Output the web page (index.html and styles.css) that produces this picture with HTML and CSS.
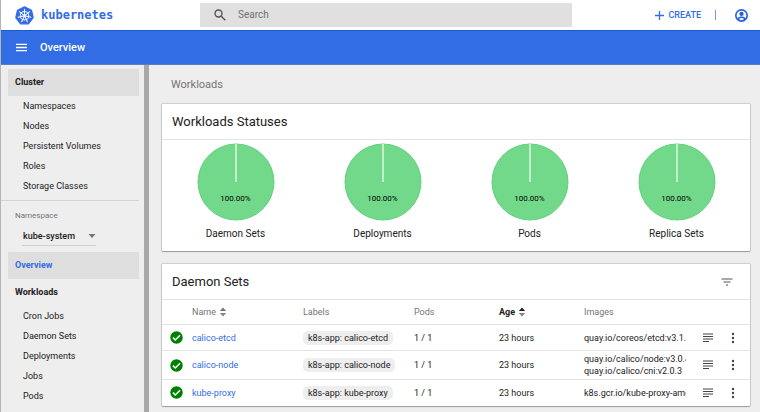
FILE: index.html
```html
<!DOCTYPE html>
<html lang="en">
<head>
<meta charset="utf-8">
<title>Overview - Kubernetes Dashboard</title>
<link rel="stylesheet" href="styles.css">
</head>
<body>
<svg class="defs" aria-hidden="true">
  <symbol id="check" viewBox="0 0 24 24"><circle cx="12" cy="12" r="11.500" fill="#008000"/><path d="M5.500 12.200l4.300 4.300 8.700-8.700" fill="none" stroke="#fff" stroke-width="2.800"/></symbol>
  <symbol id="sort" viewBox="0 0 8 10"><path class="up" d="M4 0.600L7.200 4H0.800z"/><path class="down" d="M0.800 6h6.400L4 9.400z"/></symbol>
  <symbol id="logs" viewBox="0 0 12 10"><path d="M1 1h10M1 3.500h10M1 6h10M1 8.500h6" fill="none" stroke="#444" stroke-width="1.200"/></symbol>
  <symbol id="dots" viewBox="0 0 4 12"><circle cx="2" cy="2" r="1.200"/><circle cx="2" cy="6" r="1.200"/><circle cx="2" cy="10" r="1.200"/></symbol>
  <symbol id="pie" viewBox="0 0 78 78"><circle cx="39" cy="39" r="38" fill="#72d88a" stroke="#5fd27a"/><path d="M39 1v38" stroke="#d8f5de" stroke-width="1.600"/></symbol>
</svg>
<header class="topbar">
  <a class="brand" href="#">
    <svg class="logo" viewBox="0 0 36 36" aria-hidden="true">
      <path d="M18 1.800L31.200 8.100 34.400 22.200 25.400 33.800H10.600L1.600 22.200 4.800 8.100z" fill="#326ce5" stroke="#326ce5" stroke-width="2.500" stroke-linejoin="round"/>
      <g fill="none" stroke="#fff" stroke-width="1.900" stroke-linecap="round">
        <circle cx="18" cy="18.500" r="8"/>
        <path d="M18 16V6M20 17l7.800-6.200M20.400 19.100l9.800 2.200M19.100 20.700l4.300 9M16.900 20.700l-4.300 9M15.600 19.100l-9.800 2.200M16 17l-7.800-6.200"/>
      </g>
      <circle cx="18" cy="18.500" r="2.600" fill="#fff"/>
    </svg>
    <span>kubernetes</span>
  </a>
  <label class="search">
    <svg viewBox="0 0 12 12" aria-hidden="true"><circle cx="4.500" cy="4.500" r="3.500"/><path d="M7 7l4.300 4.300"/></svg>
    <input type="search" placeholder="Search" aria-label="Search">
  </label>
  <div class="tools">
    <button class="create" type="button"><svg viewBox="0 0 9 9" aria-hidden="true"><path d="M4.500 0v9M0 4.500h9"/></svg>CREATE</button>
    <span class="bar"></span>
    <button class="user" type="button" aria-label="Account"><svg viewBox="0 0 24 24" aria-hidden="true"><circle cx="12" cy="12" r="10.500" fill="none" stroke="#2560e0" stroke-width="3"/><circle cx="12" cy="9" r="4"/><path d="M4 17c2-2.200 5-3.200 8-3.200s6 1 8 3.200l-3 4.500H7z"/><path d="M7 18.400c1.500-1.200 3.300-1.700 5-1.700s3.500.5 5 1.700c-3 2.400-7 2.400-10 0z" fill="#fff"/></svg></button>
  </div>
</header>
<div class="actionbar">
  <button class="menu" type="button" aria-label="Menu"><svg viewBox="0 0 12 9" aria-hidden="true"><path d="M0 1h12M0 4.500h12M0 8h12"/></svg></button>
  <h1>Overview</h1>
</div>
<div class="layout">
  <nav class="sidebar">
    <a class="section active" href="#">Cluster</a>
    <ul>
      <li><a href="#">Namespaces</a></li>
      <li><a href="#">Nodes</a></li>
      <li><a href="#">Persistent Volumes</a></li>
      <li><a href="#">Roles</a></li>
      <li><a href="#">Storage Classes</a></li>
    </ul>
    <div class="namespace">
      <label for="ns">Namespace</label>
      <div class="picker">
        <select id="ns"><option>kube-system</option></select>
        <svg viewBox="0 0 8 4" aria-hidden="true"><path d="M0.500 0h7L4 4z"/></svg>
      </div>
    </div>
    <a class="section active current" href="#">Overview</a>
    <a class="section" href="#">Workloads</a>
    <ul>
      <li><a href="#">Cron Jobs</a></li>
      <li><a href="#">Daemon Sets</a></li>
      <li><a href="#">Deployments</a></li>
      <li><a href="#">Jobs</a></li>
      <li><a href="#">Pods</a></li>
      <li><a href="#">Replica Sets</a></li>
    </ul>
  </nav>
  <main>
    <h2>Workloads</h2>
    <section class="card">
      <h3>Workloads Statuses</h3>
      <div class="pies">
        <figure><div class="chart"><svg><use href="#pie"/></svg><span>100.00%</span></div><figcaption>Daemon Sets</figcaption></figure>
        <figure><div class="chart"><svg><use href="#pie"/></svg><span>100.00%</span></div><figcaption>Deployments</figcaption></figure>
        <figure><div class="chart"><svg><use href="#pie"/></svg><span>100.00%</span></div><figcaption>Pods</figcaption></figure>
        <figure><div class="chart"><svg><use href="#pie"/></svg><span>100.00%</span></div><figcaption>Replica Sets</figcaption></figure>
      </div>
    </section>
    <section class="card">
      <h3>Daemon Sets <button class="filter" type="button" aria-label="Filter"><svg viewBox="0 0 12 8" aria-hidden="true"><path d="M0.500 1h11M2.500 4h7M5 7h2"/></svg></button></h3>
      <table>
        <colgroup><col class="c-status"><col class="c-name"><col class="c-labels"><col class="c-pods"><col class="c-age"><col><col class="c-logs"><col class="c-more"></colgroup>
        <thead>
          <tr><th></th><th>Name <svg class="sort"><use href="#sort"/></svg></th><th>Labels</th><th>Pods</th><th class="sorted">Age <svg class="sort"><use href="#sort"/></svg></th><th>Images</th><th></th><th></th></tr>
        </thead>
        <tbody>
          <tr>
            <td class="status"><svg><use href="#check"/></svg></td><td><a href="#">calico-etcd</a></td><td><span class="chip">k8s-app: calico-etcd</span></td><td>1 / 1</td><td>23 hours</td>
            <td class="images"><div>quay.io/coreos/etcd:v3.1.10</div></td>
            <td><button type="button" aria-label="Logs"><svg class="logs"><use href="#logs"/></svg></button></td><td><button type="button" aria-label="More"><svg class="dots"><use href="#dots"/></svg></button></td>
          </tr>
          <tr class="double">
            <td class="status"><svg><use href="#check"/></svg></td><td><a href="#">calico-node</a></td><td><span class="chip">k8s-app: calico-node</span></td><td>1 / 1</td><td>23 hours</td>
            <td class="images"><div>quay.io/calico/node:v3.0.4</div><div>quay.io/calico/cni:v2.0.3</div></td>
            <td><button type="button" aria-label="Logs"><svg class="logs"><use href="#logs"/></svg></button></td><td><button type="button" aria-label="More"><svg class="dots"><use href="#dots"/></svg></button></td>
          </tr>
          <tr>
            <td class="status"><svg><use href="#check"/></svg></td><td><a href="#">kube-proxy</a></td><td><span class="chip">k8s-app: kube-proxy</span></td><td>1 / 1</td><td>23 hours</td>
            <td class="images"><div>k8s.gcr.io/kube-proxy-amd64</div></td>
            <td><button type="button" aria-label="Logs"><svg class="logs"><use href="#logs"/></svg></button></td><td><button type="button" aria-label="More"><svg class="dots"><use href="#dots"/></svg></button></td>
          </tr>
        </tbody>
      </table>
    </section>
  </main>
</div>
</body>
</html>
```
FILE: styles.css
```css
* { box-sizing: border-box; }
body {
  margin: 0;
  height: 100vh;
  display: flex;
  flex-direction: column;
  overflow: hidden;
  border-left: 1px solid #b4b4b4;
  background: #eee;
  color: #212121;
  font: 9px/12px Roboto, sans-serif;
}
svg { display: block; flex: none; }
.defs { position: absolute; width: 0; height: 0; }
a { color: inherit; text-decoration: none; }
button { padding: 0; border: 0; background: none; color: inherit; font: inherit; display: block; }
h1, h2, h3, ul, figure { margin: 0; padding: 0; font-weight: 400; }
ul { list-style: none; }

.topbar {
  flex: none;
  display: flex;
  align-items: center;
  height: 30px;
  padding-right: 12px;
  background: #fff;
}
.brand {
  display: flex;
  align-items: center;
  gap: 7px;
  width: 199px;
  padding-left: 14px;
  color: #326de6;
  font: bold 12px/16px "DejaVu Sans Mono", monospace;
}
.logo { width: 19px; height: 19px; }
.search {
  flex: 1;
  display: flex;
  align-items: center;
  gap: 12px;
  height: 24px;
  padding-left: 14px;
  background: #e0e0e0;
  border-radius: 1px;
}
.search svg { width: 12px; height: 12px; fill: none; stroke: #555; stroke-width: 1.4; }
.search input {
  flex: 1;
  min-width: 0;
  padding: 0;
  border: 0;
  outline: 0;
  background: none;
  font: 10px/16px Roboto, sans-serif;
}
.search input::placeholder { color: #707070; }
.tools {
  display: flex;
  align-items: center;
  justify-content: flex-end;
  width: 176px;
  color: #326de6;
}
.create { display: flex; align-items: center; gap: 4px; font-weight: 500; }
.create svg { width: 9px; height: 9px; stroke: currentColor; stroke-width: 1.3; }
.bar { width: 1px; height: 10px; margin: 0 19px 0 14px; background: #6b97ec; }
.user svg { width: 13px; height: 13px; fill: #2560e0; }

.actionbar {
  flex: none;
  display: flex;
  align-items: center;
  gap: 13px;
  height: 35px;
  padding-left: 15px;
  background: #326de6;
  border-top: 1px solid #1a5ad9;
  border-bottom: 1px solid #5a7fc9;
  color: #fff;
}
.menu svg { width: 11px; height: 9px; stroke: #fff; stroke-width: 1.4; }
.actionbar h1 { font-size: 11px; line-height: 16px; font-weight: 500; }

.layout { flex: 1; min-height: 0; display: flex; }
.sidebar {
  flex: none;
  width: 148px;
  padding-top: 4px;
  overflow: hidden;
  border-right: 5px solid #a8a8a8;
}
.section {
  display: block;
  margin: 0 5px 0 7px;
  padding: 0 7px;
  line-height: 27px;
  font-weight: 700;
}
.section.active { background: #dedede; border-radius: 1px; }
.section.current { color: #326de6; }
.sidebar li { padding-left: 22px; line-height: 20px; }
.namespace {
  margin: 4px 5px 6px 0;
  padding: 9px 0 0 14px;
  border-top: 1px solid #d4d4d4;
}
.namespace label { display: block; font-size: 8px; color: #757575; }
.picker {
  display: flex;
  align-items: center;
  width: 74px;
  height: 20px;
  margin: 4px 0 0 7px;
  border-bottom: 1px solid #d0d0d0;
}
.picker select {
  flex: 1;
  min-width: 0;
  appearance: none;
  padding: 0 1px;
  border: 0;
  background: none;
  color: inherit;
  font: 500 9px/12px Roboto, sans-serif;
}
.picker svg { width: 8px; height: 4px; fill: #757575; }

main { flex: 1; min-width: 0; padding: 0 10px 0 13px; }
main h2 { padding: 12px 9px 11px; font-size: 11px; line-height: 16px; color: #757575; }
.card {
  margin-bottom: 13px;
  background: #fff;
  border-radius: 1px;
  box-shadow: 0 0 1px 1px rgba(0, 0, 0, .14), 0 1px 1px rgba(0, 0, 0, .25);
}
.card h3 {
  display: flex;
  align-items: center;
  justify-content: space-between;
  height: 35px;
  padding: 0 17px 0 10px;
  font-size: 13px;
  line-height: 16px;
}
.filter svg { width: 12px; height: 8px; stroke: #555; stroke-width: 1.2; }
.pies {
  display: grid;
  grid-template-columns: repeat(4, 1fr);
  padding: 3px 0 9px;
  border-top: 1px solid #e4e4e4;
}
figure { display: flex; flex-direction: column; align-items: center; gap: 5px; }
.chart { position: relative; }
.chart svg { width: 78px; height: 78px; }
.chart span {
  position: absolute;
  inset: 50px 0 auto;
  text-align: center;
  font-size: 8px;
  color: #000;
}
figcaption { font-size: 10px; line-height: 16px; }

table { width: 100%; table-layout: fixed; border-collapse: collapse; font-size: 9px; }
.c-status { width: 30px; }
.c-name { width: 111px; }
.c-labels { width: 111px; }
.c-pods { width: 85px; }
.c-age { width: 85px; }
.c-logs { width: 22px; }
.c-more { width: 26px; }
th, td {
  height: 26px;
  padding: 0;
  border-top: 1px solid #e4e4e4;
  text-align: left;
  vertical-align: middle;
}
th { height: 25px; color: #757575; font-weight: 400; }
.double td { height: 29px; }
th.sorted { color: #212121; font-weight: 700; }
.sort { display: inline-block; width: 8px; height: 10px; margin-left: 1px; vertical-align: -2px; }
.up { fill: currentColor; }
.down { fill: #858585; }
td a { color: #326de6; }
.status svg { width: 13px; height: 13px; margin-left: 8px; }
.chip {
  display: inline-block;
  padding: 1px 5px;
  background: #eee;
  border-radius: 5px;
  white-space: nowrap;
}
.images { padding-right: 16px; white-space: nowrap; }
.images div { overflow: hidden; }
.logs { width: 12px; height: 10px; }
.dots { width: 4px; height: 12px; margin-left: 7px; fill: #444; }
```
